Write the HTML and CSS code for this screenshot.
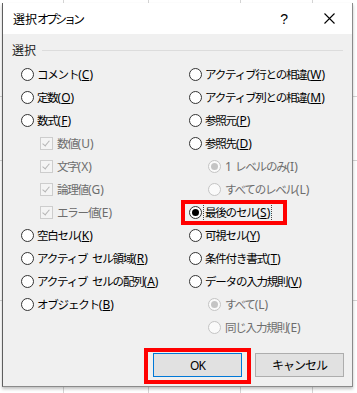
FILE: index.html
```html
<!DOCTYPE html>
<html>
<head>
    <link rel="stylesheet" href="styles.css">
</head>
<body>
    <div class="dialog">
        <div class="titlebar">
            <span class="title">選択<span class="kana">オプション</span></span>
            <span class="help">?</span>
            <svg class="close" width="11" height="11" viewBox="0 0 11 11">
                <path d="M0.5 0.5 L10.5 10.5 M10.5 0.5 L0.5 10.5" stroke="#000" stroke-width="1.1" fill="none"/>
            </svg>
        </div>

        <div class="content">
            <div class="group-head">
                <span>選択</span>
                <span class="group-line"></span>
            </div>

            <div class="options">
                <div class="col">
                    <div class="row"><span class="radio"></span><span>コメント<span class="key">(<u>C</u>)</span></span></div>
                    <div class="row"><span class="radio"></span><span>定数<span class="key">(<u>O</u>)</span></span></div>
                    <div class="row"><span class="radio"></span><span>数式<span class="key">(<u>F</u>)</span></span></div>
                    <div class="row sub off"><span class="check"></span><span>数値<span class="key">(U)</span></span></div>
                    <div class="row sub off"><span class="check"></span><span>文字<span class="key">(X)</span></span></div>
                    <div class="row sub off"><span class="check"></span><span>論理値<span class="key">(G)</span></span></div>
                    <div class="row sub off"><span class="check"></span><span>エラー値<span class="key">(E)</span></span></div>
                    <div class="row"><span class="radio"></span><span>空白セル<span class="key">(<u>K</u>)</span></span></div>
                    <div class="row"><span class="radio"></span><span>アクティブ セル領域<span class="key">(<u>R</u>)</span></span></div>
                    <div class="row"><span class="radio"></span><span>アクティブ セルの配列<span class="key">(<u>A</u>)</span></span></div>
                    <div class="row"><span class="radio"></span><span>オブジェクト<span class="key">(<u>B</u>)</span></span></div>
                </div>
                <div class="col">
                    <div class="row"><span class="radio"></span><span>アクティブ行との相違<span class="key">(<u>W</u>)</span></span></div>
                    <div class="row"><span class="radio"></span><span>アクティブ列との相違<span class="key">(<u>M</u>)</span></span></div>
                    <div class="row"><span class="radio"></span><span>参照元<span class="key">(<u>P</u>)</span></span></div>
                    <div class="row"><span class="radio"></span><span>参照先<span class="key">(<u>D</u>)</span></span></div>
                    <div class="row sub-r off"><span class="radio on"></span><span><span class="key">1 </span>レベルのみ<span class="key">(I)</span></span></div>
                    <div class="row sub-r off"><span class="radio"></span><span>すべてのレベル<span class="key">(L)</span></span></div>
                    <div class="row picked"><span class="radio on"></span><span class="focus">最後のセル<span class="key">(<u>S</u>)</span></span></div>
                    <div class="row"><span class="radio"></span><span>可視セル<span class="key">(<u>Y</u>)</span></span></div>
                    <div class="row"><span class="radio"></span><span>条件付き書式<span class="key">(<u>T</u>)</span></span></div>
                    <div class="row"><span class="radio"></span><span>データの入力規則<span class="key">(<u>V</u>)</span></span></div>
                    <div class="row sub-r off"><span class="radio on"></span><span>すべて<span class="key">(L)</span></span></div>
                    <div class="row sub-r off"><span class="radio"></span><span>同じ入力規則<span class="key">(E)</span></span></div>
                </div>
            </div>

            <div class="buttons">
                <button class="btn default mark">OK</button>
                <button class="btn">キャンセル</button>
            </div>
        </div>
    </div>
</body>
</html>
```

FILE: styles.css
```css
body {
    margin: 0;
    width: 357px;
    height: 393px;
    overflow: hidden;
    background-color: #fff;
    background-image:
        linear-gradient(to right, transparent 63px, #d4d4d4 63px, #d4d4d4 64px, transparent 64px),
        linear-gradient(to right, transparent 148px, #d4d4d4 148px, #d4d4d4 149px, transparent 149px),
        linear-gradient(to right, transparent 240px, #d4d4d4 240px, #d4d4d4 241px, transparent 241px),
        linear-gradient(to right, transparent 312px, #d4d4d4 312px, #d4d4d4 313px, transparent 313px),
        linear-gradient(to bottom, transparent 96px, #d4d4d4 96px, #d4d4d4 97px, transparent 97px),
        linear-gradient(to bottom, transparent 160px, #d4d4d4 160px, #d4d4d4 161px, transparent 161px),
        linear-gradient(to bottom, transparent 300px, #d4d4d4 300px, #d4d4d4 301px, transparent 301px);
    font-family: "Noto Sans", "Noto Sans CJK JP", sans-serif;
    font-size: 12px;
    color: #000;
}

.dialog {
    margin: 3px 0 0 2px;
    width: 349px;
    height: 383px;
    border: 1px solid #8a8a8a;
    border-left-color: #5e5e5e;
    border-top: none;
    background: #f0f0f0;
    box-shadow: 0 2px 3px rgba(0, 0, 0, 0.25);
    display: flex;
    flex-direction: column;
}

.titlebar {
    height: 31px;
    background: #fff;
    display: flex;
    align-items: center;
    padding-left: 10px;
    padding-right: 17px;
}
.title {
    font-size: 12px;
    flex: 1;
}
.title .kana {
    letter-spacing: -3px;
}
.help {
    font-family: "Liberation Sans", sans-serif;
    font-size: 14px;
    margin-right: 36px;
}

.content {
    flex: 1;
    padding: 8px 7px 0 9px;
}

.group-head {
    display: flex;
    align-items: center;
    height: 16px;
    color: #222;
}
.group-line {
    flex: 1;
    height: 1px;
    background: #dcdcdc;
    margin-left: 6px;
    margin-right: 2px;
}

.options {
    display: grid;
    grid-template-columns: 168px 1fr;
    padding-left: 9px;
    margin-top: 5px;
}
.row {
    height: 23px;
    display: flex;
    align-items: center;
    gap: 3px;
    white-space: nowrap;
    font-size: 11.5px;
    letter-spacing: -1.2px;
    word-spacing: 3px;
}
.key {
    letter-spacing: 0;
    word-spacing: 0;
    font-size: 12px;
}
.row u {
    text-underline-offset: 1px;
}
.sub {
    padding-left: 19px;
    gap: 4px;
}
.sub-r {
    padding-left: 19px;
    gap: 4px;
}
.off {
    color: #6d6d6d;
}

.radio {
    width: 11px;
    height: 11px;
    border: 1px solid #333;
    border-radius: 50%;
    background: #fff;
    flex: none;
    display: flex;
    align-items: center;
    justify-content: center;
}
.radio.on::after {
    content: "";
    width: 7px;
    height: 7px;
    border-radius: 50%;
    background: #000;
}
.off .radio {
    border-color: #c4c4c4;
    background: #fafafa;
}
.off .radio.on::after {
    background: #c4c4c4;
}

.check {
    width: 11px;
    height: 11px;
    border: 1px solid #cdcdcd;
    background: #f4f4f4;
    flex: none;
    position: relative;
}
.check::after {
    content: "";
    position: absolute;
    left: 3px;
    top: 1px;
    width: 3px;
    height: 6px;
    border: solid #b5b5b5;
    border-width: 0 1px 1px 0;
    transform: rotate(40deg);
}

.focus {
    border: 1px dotted #444;
    margin-left: -2px;
    padding: 0 1px;
    line-height: 17px;
}

.picked {
    position: relative;
}
.picked::before {
    content: "";
    position: absolute;
    left: -8px;
    top: -1px;
    width: 98px;
    height: 17px;
    border: 4px solid #f00;
}

.buttons {
    display: flex;
    justify-content: flex-end;
    gap: 13px;
    margin-top: 14px;
    padding-right: 1px;
}
.btn {
    width: 89px;
    height: 24px;
    background: #e1e1e1;
    border: 1px solid #adadad;
    font-family: "Noto Sans", "Noto Sans CJK JP", sans-serif;
    font-size: 12px;
    color: #000;
    padding: 0;
    letter-spacing: -1px;
}
.default {
    border-color: #0078d7;
}
.mark {
    position: relative;
}
.mark::before {
    content: "";
    position: absolute;
    left: -10px;
    top: -6px;
    width: 99px;
    height: 28px;
    border: 4px solid #f00;
}
```
